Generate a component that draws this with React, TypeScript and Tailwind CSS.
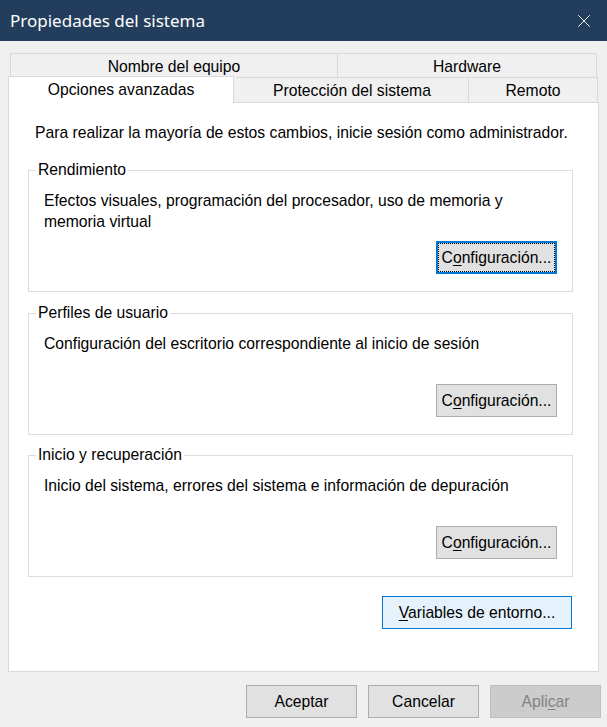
import { X } from "lucide-react";

const font = { fontFamily: '"Liberation Sans", Arial, sans-serif' };

type GroupProps = {
  title: string;
  text: React.ReactNode;
  focused?: boolean;
  className?: string;
};

const ConfigButton = ({ focused }: { focused?: boolean }) => (
  <button
    className={
      focused
        ? "w-[121px] h-[33px] bg-[#e1e1e1] border-2 border-[#0078d7] outline-1 outline-dotted outline-black outline-offset-[-3px] text-black"
        : "w-[121px] h-[33px] bg-[#e1e1e1] border border-[#adadad] text-black"
    }
  >
    C<span className="underline underline-offset-[2px]">o</span>nfiguración...
  </button>
);

const GroupBox = ({ title, text, focused, className }: GroupProps) => (
  <div
    className={
      "relative h-[122px] border border-[#dcdcdc] pt-[19px] pl-[15px] pr-[15px] pb-[17px] flex flex-col " +
      (className ?? "")
    }
  >
    <span className="absolute -top-[10px] left-[7px] bg-white px-[2px] leading-[18px]">{title}</span>
    <p className="leading-[21px]">{text}</p>
    <div className="mt-auto self-end">
      <ConfigButton focused={focused} />
    </div>
  </div>
);

export default function App() {
  return (
    <div className="w-[607px] h-[727px] bg-[#f0f0f0] flex flex-col text-[15.7px] text-black" style={font}>
      {/* Title bar */}
      <div className="h-[41px] bg-[#233d5c] flex items-center justify-between pl-[10px] pr-[12px] shrink-0">
        <span className="text-white text-[17px]" style={{ fontFamily: '"Noto Sans", "Open Sans", sans-serif' }}>
          Propiedades del sistema
        </span>
        <X className="w-[22px] h-[22px] text-white" strokeWidth={1} />
      </div>

      {/* Tabs */}
      <div className="mt-[12px] mx-[10px] flex h-[24px]">
        <div className="w-[327px] pt-[3px] border-t border-l border-[#d9d9d9] flex items-center justify-center">
          Nombre del equipo
        </div>
        <div className="flex-1 pt-[3px] border-t border-l border-r border-[#d9d9d9] flex items-center justify-center">
          Hardware
        </div>
      </div>
      <div className="mx-[8px] flex items-end h-[25px]">
        <div className="relative z-10 w-[226px] h-[27px] -mb-[1px] bg-white border-t border-l border-r border-[#d9d9d9] flex items-center justify-center pb-[1px]">
          Opciones avanzadas
        </div>
        <div className="w-[233px] h-[25px] ml-[2px] pt-[2px] border-t border-r border-[#d9d9d9] flex items-center justify-center">
          Protección del sistema
        </div>
        <div className="w-[129px] h-[25px] pt-[2px] border-t border-r border-[#d9d9d9] flex items-center justify-center">
          Remoto
        </div>
      </div>

      {/* Panel */}
      <div className="mx-[8px] h-[570px] bg-white border border-[#d9d9d9] flex flex-col pl-[19px] pr-[25px]">
        <p className="mt-[21px] pl-[7px] leading-[18px] whitespace-nowrap">
          Para realizar la mayoría de estos cambios, inicie sesión como administrador.
        </p>
        <GroupBox
          className="mt-[28px]"
          title="Rendimiento"
          text="Efectos visuales, programación del procesador, uso de memoria y memoria virtual"
          focused
        />
        <GroupBox
          className="mt-[21px]"
          title="Perfiles de usuario"
          text="Configuración del escritorio correspondiente al inicio de sesión"
        />
        <GroupBox
          className="mt-[20px]"
          title="Inicio y recuperación"
          text="Inicio del sistema, errores del sistema e información de depuración"
        />
        <div className="mt-[19px] pr-[1px] flex justify-end">
          <button className="w-[190px] h-[33px] bg-[#e5f1fb] border border-[#0078d7] text-black">
            <span className="underline underline-offset-[2px]">V</span>ariables de entorno...
          </button>
        </div>
      </div>

      {/* Dialog buttons */}
      <div className="mt-[13px] flex justify-end gap-[11px] pr-[6px]">
        <button className="w-[111px] h-[33px] bg-[#e1e1e1] border border-[#adadad]">Aceptar</button>
        <button className="w-[111px] h-[33px] bg-[#e1e1e1] border border-[#adadad]">Cancelar</button>
        <button className="w-[111px] h-[33px] bg-[#cccccc] border border-[#bfbfbf] text-[#838383]">
          Apli<span className="underline underline-offset-[2px]">c</span>ar
        </button>
      </div>
    </div>
  );
}
